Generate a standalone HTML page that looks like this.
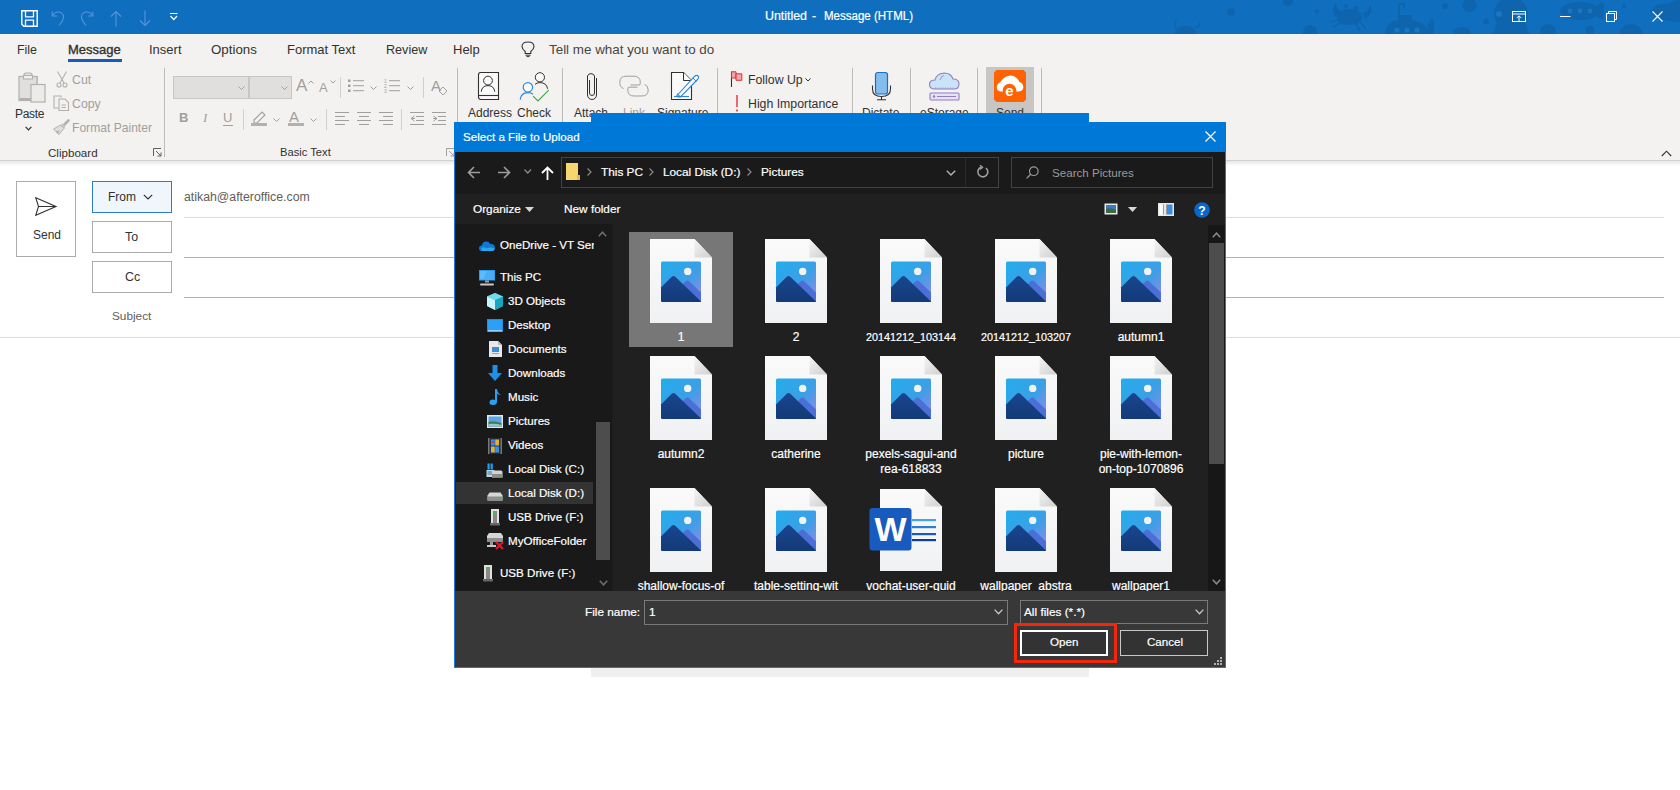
<!DOCTYPE html>
<html><head><meta charset="utf-8">
<style>
*{margin:0;padding:0;box-sizing:border-box}
html,body{width:1680px;height:790px;overflow:hidden;background:#fff;font-family:"Liberation Sans",sans-serif;position:relative}
.a{position:absolute}
.t{position:absolute;white-space:nowrap;line-height:1}
svg{position:absolute;overflow:visible}
#title{left:0;top:0;width:1680px;height:34px;background:#106ebe;overflow:hidden}
#tabs{left:0;top:34px;width:1680px;height:34px;background:#f3f2f1}
#ribbon{left:0;top:68px;width:1680px;height:93px;background:#f3f2f1;border-bottom:1px solid #d2d0ce}
.sep{position:absolute;width:1px;background:#bdbbb8}
.dis{color:#a19f9d}
.rt{color:#323130;font-size:12px}
.box{position:absolute;border:1px solid #ababab;background:#fff}
.line{position:absolute;height:1px;background:#c8c6c4}
#dlg{left:454px;top:122px;width:772px;height:546px;background:#191919;border:1px solid #1a7ad8;border-top:none}
.navt{position:absolute;color:#fff;font-size:11.6px;white-space:nowrap;line-height:1}
.fl{position:absolute;color:#fff;font-size:12px;white-space:nowrap;line-height:15px;text-align:center;width:110px}
.t[style*="color:#fff"],.navt,.fl{-webkit-text-stroke:0.2px currentColor}
</style></head>
<body>
<svg width="0" height="0" style="position:absolute">
<defs>
<linearGradient id="pg" x1="0" y1="0" x2="0" y2="1"><stop offset="0" stop-color="#fafafa"/><stop offset="1" stop-color="#f0f1f3"/></linearGradient>
<linearGradient id="fg" x1="0" y1="0" x2="1" y2="1"><stop offset="0" stop-color="#f4f4f4"/><stop offset="1" stop-color="#cfcfcf"/></linearGradient>
<linearGradient id="sky" x1="0" y1="0" x2="1" y2="1"><stop offset="0" stop-color="#22adec"/><stop offset="0.55" stop-color="#3c9fe6"/><stop offset="1" stop-color="#9a88e6"/></linearGradient>
<linearGradient id="mtn" x1="0" y1="0" x2="0" y2="1"><stop offset="0" stop-color="#1a468f"/><stop offset="1" stop-color="#133a78"/></linearGradient>
<symbol id="imgdoc" viewBox="0 0 62 84">
<path d="M0 0H44.5L62 18.5V84H0Z" fill="url(#pg)"/>
<path d="M44.5 0V18.5H62Z" fill="url(#fg)"/>
<rect x="11" y="22.5" width="40" height="40.5" rx="1.5" fill="url(#sky)"/>
<circle cx="37.7" cy="32.4" r="3.7" fill="#f2f2f2"/>
<path d="M23 42.5Q37 40 51 53.5V63H32Z" fill="#4a6bd5" opacity="0"/>
<path d="M27 51Q34 43.5 36 42Q37.5 41 39 42.3L51 53.5V63H30Z" fill="#4b6ed7"/>
<path d="M11 48.5L22 37.6Q23.5 36.3 25 37.6L51 62.6Q50.6 63 49.5 63H12.5Q11 63 11 61.5Z" fill="url(#mtn)"/>
</symbol>
</defs></svg>
<!-- TITLE BAR -->
<div id="title" class="a"></div>
<!-- title pattern -->
<svg style="left:0;top:0" width="1680" height="34"><g fill="#0f64ae">
<circle cx="1231" cy="12" r="3.8"/><circle cx="1288" cy="1" r="5"/><circle cx="1317" cy="11.6" r="2.3"/>
<path d="M1337 18Q1340 8 1350 9Q1360 9 1362 17Q1362 24 1350 25Q1338 25 1337 18Z"/>
<path d="M1336 16Q1332 10 1336 3Q1334 8 1340 12Z M1364 14Q1370 12 1370 6Q1372 12 1366 18Z M1338 20L1330 22M1340 23L1333 27M1360 22L1366 29M1356 24L1360 31" stroke="#0f64ae" stroke-width="1.6"/>
<circle cx="1346" cy="6" r="2"/><circle cx="1356" cy="8" r="2"/>
<path d="M1175 32Q1178 25 1186 26Q1194 26 1196 32L1196 34H1175Z"/><path d="M1176 28Q1174 22 1177 20M1196 28Q1200 26 1200 22" stroke="#0f64ae" stroke-width="1.4" fill="none"/>
<path d="M1303 34Q1303 25 1310 25Q1317 25 1317 34Z"/>
<path d="M1385 34Q1385 22 1398 20V15H1412V20Q1424 22 1428 30L1432 34Z"/><path d="M1399 16V4H1404V8" stroke="#0f64ae" stroke-width="2" fill="none"/><path d="M1428 24Q1430 18 1434 20V34H1428Z"/>
<circle cx="1445" cy="6" r="3"/><circle cx="1469.5" cy="5" r="7"/><circle cx="1486" cy="21.5" r="3"/>
<ellipse cx="1511" cy="14" rx="17" ry="17"/><path d="M1496 24Q1494 34 1490 34H1532Q1528 34 1526 24Z"/>
<path d="M1453 32Q1455 27 1462 27Q1469 27 1471 32V34H1453Z"/>
<ellipse cx="1580" cy="11" rx="20" ry="9"/><path d="M1596 8Q1600 0 1604 4Q1604 12 1604 18Q1600 22 1596 14Z"/>
<path d="M1540 30Q1542 24 1548 24Q1554 24 1556 30V34H1540Z"/>
<circle cx="1590" cy="30" r="4.5"/><circle cx="1624" cy="6" r="2"/><circle cx="1631" cy="36" r="12"/>
<path d="M1650 12Q1656 2 1668 4Q1676 0 1680 -2V22Q1668 22 1656 18Z"/>
</g><g fill="#1a75c2"><circle cx="1499" cy="14" r="3"/><circle cx="1570" cy="11" r="2.4"/><circle cx="1580" cy="11" r="2.4"/><circle cx="1590" cy="11" r="2.4"/><circle cx="1397" cy="30" r="2.6"/><circle cx="1407" cy="30" r="2.6"/><circle cx="1417" cy="30" r="2.6"/></g></svg>
<svg style="left:21px;top:10px" width="17" height="17"><path d="M0.8 0.8H16.2V16.2H2.8L0.8 14.2Z" stroke="#fff" stroke-width="1.4" fill="none"/><path d="M4.5 1V6.8H12.5V1" stroke="#fff" stroke-width="1.3" fill="none"/><path d="M4.5 16V10.2H12.5V16" stroke="#fff" stroke-width="1.3" fill="none"/></svg>
<svg style="left:51px;top:10px" width="14" height="16"><path d="M1.2 1.5V6H5.8" stroke="#5596d8" stroke-width="1.1" fill="none"/><path d="M1.5 5.6Q4 1.5 8 2Q12.5 3 12.5 7Q12.5 10 8 15.5" stroke="#5596d8" stroke-width="1.1" fill="none"/></svg>
<svg style="left:80px;top:10px" width="14" height="16"><path d="M12.8 1.5V6H8.2" stroke="#5596d8" stroke-width="1.1" fill="none"/><path d="M12.5 5.6Q10 1.5 6 2Q1.5 3 1.5 7Q1.5 10 6 15.5" stroke="#5596d8" stroke-width="1.1" fill="none"/></svg>
<svg style="left:110px;top:10px" width="12" height="17"><path d="M6 1.5V16.5M1 6.5L6 1.5L11 6.5" stroke="#5596d8" stroke-width="1.1" fill="none"/></svg>
<svg style="left:139px;top:10px" width="12" height="17"><path d="M6 0.5V15.5M1 10.5L6 15.5L11 10.5" stroke="#5596d8" stroke-width="1.1" fill="none"/></svg>
<svg style="left:170px;top:13px" width="8" height="8"><path d="M0 0.5H7.5" stroke="#fff" stroke-width="1"/><path d="M0.5 3L3.8 6.5L7 3" stroke="#fff" stroke-width="1.3" fill="none"/></svg>
<div class="t" style="left:765px;top:10px;font-size:12.4px;color:#fff">Untitled</div><div class="t" style="left:812px;top:10px;font-size:12.4px;color:#fff">-</div><div class="t" style="left:824px;top:10px;font-size:12.4px;color:#fff;transform:scaleX(0.93);transform-origin:0 0">Message (HTML)</div>
<svg style="left:1512px;top:11px" width="14" height="11"><rect x="0.5" y="0.5" width="13" height="10" stroke="#fff" stroke-width="1" fill="none"/><path d="M0.5 3H13.5" stroke="#fff" stroke-width="1"/><path d="M7 10V5M4.8 7L7 4.8L9.2 7" stroke="#fff" stroke-width="1" fill="none"/></svg>
<svg style="left:1560px;top:16px" width="11" height="1"><path d="M0 0.5H10.5" stroke="#fff" stroke-width="1"/></svg>
<svg style="left:1606px;top:11px" width="11" height="11"><rect x="0.5" y="2.5" width="8" height="8" stroke="#fff" stroke-width="1" fill="none"/><path d="M2.5 2.5V0.5H10.5V8.5H8.5" stroke="#fff" stroke-width="1" fill="none"/></svg>
<svg style="left:1652px;top:11px" width="11" height="11"><path d="M0.5 0.5L10.5 10.5M10.5 0.5L0.5 10.5" stroke="#fff" stroke-width="1.1"/></svg>
<div id="tabs" class="a"></div>
<div class="t rt" style="left:17px;top:44px;font-size:12.4px">File</div>
<div class="t rt" style="left:68px;top:43px;font-size:13px;-webkit-text-stroke:0.35px currentColor">Message</div>
<div class="a" style="left:68px;top:59px;width:54px;height:3px;background:#185abd"></div>
<div class="t rt" style="left:149px;top:43px;font-size:13px">Insert</div>
<div class="t rt" style="left:211px;top:43px;font-size:13.3px">Options</div>
<div class="t rt" style="left:287px;top:43px;font-size:13px">Format Text</div>
<div class="t rt" style="left:386px;top:44px;font-size:12.6px">Review</div>
<div class="t rt" style="left:453px;top:43px;font-size:13px">Help</div>
<svg style="left:521px;top:41px" width="14" height="16"><path d="M4.2 10.5Q1 8.2 1 5.6Q1 1 7 1Q13 1 13 5.6Q13 8.2 9.8 10.5V12.5H4.2Z" stroke="#323130" stroke-width="1.1" fill="none"/><path d="M4.5 14.2H9.5M5.5 15.6H8.5" stroke="#323130" stroke-width="1"/></svg>
<div class="t rt" style="left:549px;top:43px;font-size:13.4px;color:#484644">Tell me what you want to do</div>
<div id="ribbon" class="a"></div>
<div class="a" style="left:0;top:161px;width:1680px;height:5px;background:linear-gradient(#e8e7e6,#fff)"></div>
<!-- clipboard group -->
<svg style="left:18px;top:72px" width="28" height="31"><path d="M1 4.5H6V3Q6 1 8 1H12Q14 1 14 3V4.5H19V12" stroke="#b3b0ad" stroke-width="1.2" fill="#e6e6e6"/><rect x="1" y="4.5" width="18" height="24" fill="#e1dfdd" stroke="#b3b0ad" stroke-width="1.2"/><rect x="1.6" y="26" width="17" height="2.4" fill="#b3b0ad"/><rect x="5.5" y="3.5" width="9" height="3.5" fill="#f3f2f1" stroke="#b3b0ad" stroke-width="1.1"/><rect x="13" y="12.5" width="14" height="17.5" fill="#edebe9" stroke="#b3b0ad" stroke-width="1.2"/></svg>
<div class="t rt" style="left:15px;top:108px;font-size:12px;letter-spacing:-0.3px">Paste</div>
<svg style="left:25px;top:126px" width="7" height="5"><path d="M0.6 0.8L3.5 3.8L6.4 0.8" stroke="#323130" stroke-width="1.2" fill="none"/></svg>
<svg style="left:56px;top:71px" width="12" height="17"><path d="M1.5 0.5L8 12M10.5 0.5L4 12" stroke="#b3b0ad" stroke-width="1.1" fill="none"/><circle cx="3" cy="14" r="2" stroke="#b3b0ad" stroke-width="1.1" fill="none"/><circle cx="9" cy="14" r="2" stroke="#b3b0ad" stroke-width="1.1" fill="none"/></svg>
<div class="t dis" style="left:72px;top:74px;font-size:12.3px">Cut</div>
<svg style="left:53px;top:95px" width="17" height="16"><path d="M8 2.5V1H1V13H6" stroke="#b3b0ad" stroke-width="1.1" fill="none"/><path d="M6 4H12L15.5 7.5V15.5H6Z" stroke="#b3b0ad" stroke-width="1.1" fill="none"/><path d="M8.5 10H13M8.5 12.5H13" stroke="#b3b0ad" stroke-width="1"/></svg>
<div class="t dis" style="left:72px;top:98px;font-size:12.3px">Copy</div>
<svg style="left:53px;top:119px" width="17" height="17"><path d="M10.5 6.5L15.5 1.5" stroke="#b3b0ad" stroke-width="2.6" stroke-linecap="round"/><path d="M9 4.5L12.5 8L11 9.5L7.5 6Z" fill="#c8c6c4"/><path d="M7.5 6L11 9.5L6 15.5L0.5 10Z" fill="#e1dfdd" stroke="#b3b0ad" stroke-width="1"/><path d="M2.5 12L7 11.5L4.5 15" fill="#b3b0ad"/></svg>
<div class="t dis" style="left:72px;top:122px;font-size:12.1px">Format Painter</div>
<div class="t rt" style="left:48px;top:147px;font-size:11.6px">Clipboard</div>
<svg style="left:153px;top:148px" width="9" height="9"><path d="M0.5 8V0.5H8" stroke="#605e5c" stroke-width="1" fill="none"/><path d="M3 3L8 8M8 4.5V8H4.5" stroke="#605e5c" stroke-width="1" fill="none"/></svg>
<div class="sep" style="left:164px;top:68px;height:89px"></div>
<!-- basic text -->
<div class="a" style="left:173px;top:76px;width:76px;height:23px;background:#e1dfdd;border:1px solid #c8c6c4"></div>
<div class="a" style="left:249px;top:76px;width:43px;height:23px;background:#e1dfdd;border:1px solid #c8c6c4"></div>
<svg style="left:238px;top:86px" width="7" height="5"><path d="M0.5 0.5L3.5 3.5L6.5 0.5" stroke="#a19f9d" stroke-width="1" fill="none"/></svg>
<svg style="left:281px;top:86px" width="7" height="5"><path d="M0.5 0.5L3.5 3.5L6.5 0.5" stroke="#a19f9d" stroke-width="1" fill="none"/></svg>
<div class="t dis" style="left:296px;top:77px;font-size:17px;color:#a19f9d">A</div>
<svg style="left:308px;top:80px" width="6" height="4"><path d="M0.5 3.5L3 1L5.5 3.5" stroke="#a19f9d" stroke-width="1" fill="none"/></svg>
<div class="t dis" style="left:319px;top:81px;font-size:13px">A</div>
<svg style="left:330px;top:80px" width="6" height="4"><path d="M0.5 0.5L3 3L5.5 0.5" stroke="#a19f9d" stroke-width="1" fill="none"/></svg>
<div class="sep" style="left:340px;top:77px;height:21px;background:#d2d0ce"></div>
<svg style="left:348px;top:79px" width="16" height="14"><g fill="#a19f9d"><rect x="0" y="0.5" width="2.5" height="2.5"/><rect x="0" y="5.5" width="2.5" height="2.5"/><rect x="0" y="10.5" width="2.5" height="2.5"/><rect x="5" y="1.2" width="11" height="1"/><rect x="5" y="6.2" width="11" height="1"/><rect x="5" y="11.2" width="11" height="1"/></g></svg>
<svg style="left:370px;top:86px" width="7" height="5"><path d="M0.5 0.5L3.5 3.5L6.5 0.5" stroke="#a19f9d" stroke-width="1" fill="none"/></svg>
<svg style="left:384px;top:78px" width="16" height="16"><g fill="#a19f9d"><text x="0" y="5" font-size="5" font-family="Liberation Sans">1</text><text x="0" y="10" font-size="5" font-family="Liberation Sans">2</text><text x="0" y="15" font-size="5" font-family="Liberation Sans">3</text><rect x="5" y="2.2" width="11" height="1"/><rect x="5" y="7.2" width="11" height="1"/><rect x="5" y="12.2" width="11" height="1"/></g></svg>
<svg style="left:407px;top:86px" width="7" height="5"><path d="M0.5 0.5L3.5 3.5L6.5 0.5" stroke="#a19f9d" stroke-width="1" fill="none"/></svg>
<div class="sep" style="left:423px;top:77px;height:21px;background:#d2d0ce"></div>
<div class="t dis" style="left:431px;top:78px;font-size:15px">A</div>
<svg style="left:438px;top:86px" width="10" height="9"><path d="M1 5L5 1L9 5L5 9Z" stroke="#a19f9d" stroke-width="1" fill="none"/></svg>
<div class="t" style="left:179px;top:111px;font-size:13px;font-weight:bold;color:#a19f9d">B</div>
<div class="t" style="left:203px;top:111px;font-size:13px;font-style:italic;color:#a19f9d;font-family:'Liberation Serif',serif">I</div>
<div class="t" style="left:223px;top:111px;font-size:13px;color:#a19f9d">U</div>
<div class="a" style="left:223px;top:125px;width:10px;height:1px;background:#a19f9d"></div>
<div class="sep" style="left:243px;top:109px;height:21px;background:#d2d0ce"></div>
<svg style="left:251px;top:110px" width="17" height="16"><path d="M3 10L11 2L14 5L6 13H3Z" stroke="#a19f9d" stroke-width="1.1" fill="none"/><rect x="0" y="13" width="16" height="3" fill="#b3b0ad"/></svg>
<svg style="left:273px;top:118px" width="7" height="5"><path d="M0.5 0.5L3.5 3.5L6.5 0.5" stroke="#a19f9d" stroke-width="1" fill="none"/></svg>
<div class="t dis" style="left:289px;top:109px;font-size:15px">A</div>
<div class="a" style="left:288px;top:123px;width:16px;height:3px;background:#b3b0ad"></div>
<svg style="left:310px;top:118px" width="7" height="5"><path d="M0.5 0.5L3.5 3.5L6.5 0.5" stroke="#a19f9d" stroke-width="1" fill="none"/></svg>
<div class="sep" style="left:326px;top:109px;height:21px;background:#d2d0ce"></div>
<svg style="left:335px;top:112px" width="58" height="13"><g fill="#a19f9d"><rect x="0" y="0" width="14" height="1"/><rect x="0" y="4" width="10" height="1"/><rect x="0" y="8" width="14" height="1"/><rect x="0" y="12" width="10" height="1"/>
<rect x="22" y="0" width="14" height="1"/><rect x="24" y="4" width="10" height="1"/><rect x="22" y="8" width="14" height="1"/><rect x="24" y="12" width="10" height="1"/>
<rect x="44" y="0" width="14" height="1"/><rect x="48" y="4" width="10" height="1"/><rect x="44" y="8" width="14" height="1"/><rect x="48" y="12" width="10" height="1"/></g></svg>
<div class="sep" style="left:401px;top:109px;height:21px;background:#d2d0ce"></div>
<svg style="left:410px;top:112px" width="38" height="13"><g fill="#a19f9d"><rect x="0" y="0" width="14" height="1"/><rect x="6" y="4" width="8" height="1"/><rect x="6" y="8" width="8" height="1"/><rect x="0" y="12" width="14" height="1"/>
<rect x="22" y="0" width="14" height="1"/><rect x="28" y="4" width="8" height="1"/><rect x="28" y="8" width="8" height="1"/><rect x="22" y="12" width="14" height="1"/></g><path d="M4.5 4L1 6.5L4.5 9M1 6.5H5" stroke="#a19f9d" stroke-width="1" fill="none"/><path d="M23.5 4L27 6.5L23.5 9M23 6.5H27" stroke="#a19f9d" stroke-width="1" fill="none"/></svg>
<div class="t rt" style="left:280px;top:147px;font-size:11.2px">Basic Text</div>
<svg style="left:446px;top:148px" width="9" height="9"><path d="M0.5 8V0.5H8" stroke="#a19f9d" stroke-width="1" fill="none"/><path d="M3 3L8 8M8 4.5V8H4.5" stroke="#a19f9d" stroke-width="1" fill="none"/></svg>
<div class="sep" style="left:457px;top:68px;height:89px"></div>
<!-- names / include -->
<svg style="left:478px;top:72px" width="22" height="29"><path d="M2.5 0.5H20.5V27.5H3Q0.5 27.5 0.5 25V3Q0.5 0.5 2.5 0.5Z" stroke="#323130" stroke-width="1.1" fill="#fafafa"/><path d="M0.8 23.5H20.5" stroke="#323130" stroke-width="1.1"/><circle cx="10" cy="8.6" r="4.4" stroke="#323130" stroke-width="1" fill="none"/><path d="M3.2 19.7Q4 13.6 10 13.6Q16 13.6 16.8 19.7" stroke="#323130" stroke-width="1" fill="none"/></svg>
<div class="t rt" style="left:468px;top:107px;font-size:12px">Address</div>
<svg style="left:519px;top:72px" width="31" height="30"><circle cx="20.9" cy="5.3" r="4.6" stroke="#323130" stroke-width="1" fill="#fafafa"/><path d="M16 12.3Q18 10.6 20.9 10.6Q27.6 10.6 28.6 16.8" stroke="#323130" stroke-width="1" fill="none"/><circle cx="8.9" cy="15.3" r="4.7" stroke="#2b88d8" stroke-width="1.2" fill="#fafafa"/><path d="M1.2 27.7Q1.8 20.6 8.9 20.6Q12.3 20.6 14 22.2" stroke="#2b88d8" stroke-width="1.2" fill="none"/><path d="M14.1 24.1L19 28.9L29.7 18.1" stroke="#3aa645" stroke-width="1.1" fill="none"/></svg>
<div class="t rt" style="left:517px;top:107px;font-size:12px">Check</div>
<div class="sep" style="left:562px;top:68px;height:89px"></div>
<svg style="left:585px;top:71px" width="14" height="31"><path d="M4.5 9V22A2.5 2.5 0 0 0 9.5 22V5A3.75 3.75 0 0 0 2.5 5V24A4.5 4.5 0 0 0 11.5 24V7" stroke="#323130" stroke-width="1" fill="none"/></svg>
<div class="t rt" style="left:574px;top:107px;font-size:12px">Attach</div>
<svg style="left:619px;top:75px" width="31" height="22"><path d="M4.5 13.5Q0.8 12.5 0.8 7.3Q0.8 1.2 7 1.2H15Q21.3 1.2 21.3 7.3Q21.3 9 20.7 10H11.5" stroke="#a19f9d" stroke-width="1" fill="none"/><path d="M25.5 9.5Q29.2 10.5 29.2 15Q29.2 21 23 21H15Q8.8 21 8.8 15Q8.8 13 9.4 12.2H18.5" stroke="#a19f9d" stroke-width="1" fill="none"/></svg>
<div class="t dis" style="left:623px;top:107px;font-size:12px">Link</div>
<svg style="left:671px;top:72px" width="29" height="29"><path d="M0.5 0.5H12.5L20.5 8.5V27.5H0.5Z" stroke="#323130" stroke-width="1.1" fill="#fafafa"/><path d="M12.5 0.5V8.5H20.5" stroke="#323130" stroke-width="1" fill="#fafafa"/><path d="M6.5 23L23.5 4.5Q25.5 2.5 27 4Q28.5 5.5 26.5 7.5L9.5 25L5.8 24.5Z" stroke="#2b88d8" stroke-width="1.1" fill="#fafafa"/><path d="M5.8 24.5L9.5 25L6.5 21.5Z" fill="#7cb9ea" stroke="#2b88d8" stroke-width="0.8"/><path d="M22 6L25.5 9.5" stroke="#2b88d8" stroke-width="1"/><path d="M3 24.5H18" stroke="#2b88d8" stroke-width="1.1"/></svg>
<div class="t rt" style="left:657px;top:107px;font-size:12px">Signature</div>
<div class="sep" style="left:717px;top:68px;height:89px"></div>
<!-- tags -->
<svg style="left:730px;top:71px" width="13" height="17"><path d="M1.5 0.5V16" stroke="#323130" stroke-width="1.1"/><path d="M1.5 0.8H6V7H1.5Z" fill="#f8a1a8" stroke="#d13438" stroke-width="1"/><path d="M6 2.8H11.8V9.3H6Z" fill="#f8a1a8" stroke="#d13438" stroke-width="1"/></svg>
<div class="t rt" style="left:748px;top:74px;font-size:12.3px">Follow Up</div>
<svg style="left:805px;top:78px" width="6" height="4"><path d="M0.4 0.4L3 3L5.6 0.4" stroke="#323130" stroke-width="1" fill="none"/></svg>
<svg style="left:735px;top:95px" width="4" height="17"><rect x="1.2" y="0" width="1.6" height="12" fill="#e8474f"/><rect x="1" y="14.6" width="2" height="1.8" fill="#e8474f"/></svg>
<div class="t rt" style="left:748px;top:98px;font-size:12.3px">High Importance</div>
<div class="sep" style="left:852px;top:68px;height:89px"></div>
<!-- dictate -->
<svg style="left:871px;top:71px" width="21" height="30"><rect x="4.5" y="1.5" width="12" height="21.5" rx="2.2" stroke="#1a6fc4" stroke-width="1.2" fill="#84bdec"/><path d="M1.5 14.5V18Q1.5 25.5 10.5 25.5Q19.5 25.5 19.5 18V14.5" stroke="#323130" stroke-width="1.1" fill="none"/><path d="M10.5 25.5V28.5M6 28.8H15" stroke="#323130" stroke-width="1.1"/></svg>
<div class="t rt" style="left:862px;top:107px;font-size:12px">Dictate</div>
<div class="sep" style="left:910px;top:68px;height:89px"></div>
<svg style="left:929px;top:72px" width="31" height="29"><path d="M6 17Q0.5 17 0.5 12.5Q0.5 8 6 8Q7 2 15 1Q22 1 24 7Q30 7 30 12Q30 17 25 17Z" stroke="#8f7fbf" stroke-width="1.1" fill="#c9e4f7"/><path d="M11 8Q12 4 15 3.5" stroke="#8f7fbf" stroke-width="0.8" fill="none"/><path d="M6 16H25" stroke="#8f7fbf" stroke-width="0.8" stroke-dasharray="1 1.5"/><rect x="1" y="21" width="29" height="7" rx="1" stroke="#8f7fbf" stroke-width="1.1" fill="#e9e1f5"/><circle cx="5" cy="24.5" r="1.2" fill="#8f7fbf"/><path d="M8 24.5H27" stroke="#8f7fbf" stroke-width="1"/></svg>
<div class="t rt" style="left:920px;top:107px;font-size:12px">eStorage</div>
<div class="sep" style="left:977px;top:68px;height:89px"></div>
<div class="a" style="left:986px;top:67px;width:48px;height:50px;background:#c8c6c4"></div>
<svg style="left:994px;top:70px" width="32" height="32"><path d="M2.5 0H29.5L32 2.5V29.5L29.5 32H2.5L0 29.5V2.5Z" fill="#ff6200"/><path d="M6.5 21.5Q2.5 21 2.8 17Q3 13.5 6.5 12Q9.5 7 14 6Q18.5 4.5 22 7.5Q25 10 25.5 12Q29.5 13.5 29.3 17.5Q29 21 25 21.5Z" fill="#fff"/><circle cx="15.5" cy="20.5" r="6.8" fill="#ff6200"/><text x="15.5" y="26" font-family="Liberation Sans" font-weight="bold" font-size="15" fill="#fff" text-anchor="middle">e</text></svg>
<div class="t rt" style="left:996px;top:107px;font-size:12px">Send</div>
<div class="sep" style="left:1041px;top:68px;height:89px"></div>
<svg style="left:1661px;top:150px" width="11" height="7"><path d="M0.8 6L5.5 1.2L10.2 6" stroke="#323130" stroke-width="1.1" fill="none"/></svg>

<!-- FORM -->
<div class="box" style="left:16px;top:181px;width:60px;height:76px"></div>
<div class="box" style="left:92px;top:181px;width:80px;height:32px;border-color:#2b7bd3;background:#eff6fc"></div>
<div class="box" style="left:92px;top:221px;width:80px;height:32px"></div>
<div class="box" style="left:92px;top:261px;width:80px;height:32px"></div>
<div class="line" style="left:184px;top:217px;width:1480px;background:#e1dfdd"></div>
<div class="line" style="left:184px;top:257px;width:1480px;background:#b3b0ad"></div>
<div class="line" style="left:184px;top:297px;width:1480px;background:#b3b0ad"></div>
<div class="line" style="left:0;top:337px;width:1680px;background:#e1dfdd"></div>
<svg style="left:35px;top:197px" width="22" height="19"><path d="M0.8 0.8L21 9.5L0.8 18.2L3.5 9.5Z" stroke="#323130" stroke-width="1.1" fill="none" stroke-linejoin="miter"/><path d="M3.5 9.5H21" stroke="#323130" stroke-width="1"/></svg>
<div class="t rt" style="left:33px;top:229px;font-size:12px">Send</div>
<div class="t rt" style="left:108px;top:191px;font-size:12px">From</div>
<svg style="left:143px;top:194px" width="10" height="6"><path d="M0.8 0.8L5 5L9.2 0.8" stroke="#323130" stroke-width="1.2" fill="none"/></svg>
<div class="t rt" style="left:125px;top:231px;font-size:12.4px">To</div>
<div class="t rt" style="left:125px;top:271px;font-size:12.4px">Cc</div>
<div class="t rt" style="left:112px;top:311px;font-size:11.8px;color:#605e5c">Subject</div>
<div class="t rt" style="left:184px;top:191px;font-size:12.3px;color:#605e5c">atikah@afteroffice.com</div>

<!-- BEHIND WINDOW -->
<div class="a" style="left:591px;top:113px;width:498px;height:10px;background:#0078d7"></div>
<div class="a" style="left:591px;top:668px;width:498px;height:9px;background:#efefef"></div>

<!-- DIALOG -->

<div id="dlg" class="a"></div>
<!-- dialog title -->
<div class="a" style="left:454px;top:122px;width:772px;height:30px;background:#0078d7"></div>
<div class="t" style="left:463px;top:131px;font-size:11.6px;color:#fff">Select a File to Upload</div>
<svg style="left:1205px;top:131px" width="11" height="11"><path d="M0.5 0.5L10.5 10.5M10.5 0.5L0.5 10.5" stroke="#fff" stroke-width="1.2"/></svg>
<!-- nav row -->
<div class="a" style="left:455px;top:152px;width:770px;height:42px;background:#1a1a1a"></div>
<svg style="left:467px;top:166px" width="14" height="13"><path d="M13 6.5H1.5M7 1L1.5 6.5L7 12" stroke="#9d9d9d" stroke-width="1.6" fill="none"/></svg>
<svg style="left:497px;top:166px" width="14" height="13"><path d="M1 6.5H12.5M7 1L12.5 6.5L7 12" stroke="#9d9d9d" stroke-width="1.6" fill="none"/></svg>
<svg style="left:524px;top:169px" width="8" height="6"><path d="M0.5 0.5L3.75 4L7 0.5" stroke="#8a8a8a" stroke-width="1.3" fill="none"/></svg>
<svg style="left:541px;top:166px" width="13" height="14"><path d="M6.5 14V1.5M1 7L6.5 1.5L12 7" stroke="#fff" stroke-width="1.8" fill="none"/></svg>
<div class="a" style="left:561px;top:157px;width:438px;height:31px;border:1px solid #434343;background:#1a1a1a"></div>
<div class="a" style="left:965px;top:158px;width:1px;height:29px;background:#2a2a2a"></div>
<svg style="left:566px;top:163px" width="14" height="17"><path d="M0 0H12V13H14V17H0Z" fill="#f7d66f"/><path d="M11 12H14V17H11Z" fill="#e1b94c"/></svg>
<svg style="left:587px;top:168px" width="5" height="8"><path d="M0.5 0.5L4 4L0.5 7.5" stroke="#8a8a8a" stroke-width="1.2" fill="none"/></svg>
<div class="t" style="left:601px;top:167px;font-size:11.8px;color:#fff">This PC</div>
<svg style="left:649px;top:168px" width="5" height="8"><path d="M0.5 0.5L4 4L0.5 7.5" stroke="#8a8a8a" stroke-width="1.2" fill="none"/></svg>
<div class="t" style="left:663px;top:167px;font-size:11.8px;color:#fff">Local Disk (D:)</div>
<svg style="left:747px;top:168px" width="5" height="8"><path d="M0.5 0.5L4 4L0.5 7.5" stroke="#8a8a8a" stroke-width="1.2" fill="none"/></svg>
<div class="t" style="left:761px;top:167px;font-size:11.8px;color:#fff">Pictures</div>
<svg style="left:946px;top:170px" width="10" height="7"><path d="M0.8 0.8L5 5L9.2 0.8" stroke="#b0b0b0" stroke-width="1.5" fill="none"/></svg>
<svg style="left:977px;top:165px" width="12" height="13"><path d="M4 2.2A5 5 0 1 0 9 3" stroke="#a0a0a0" stroke-width="1.6" fill="none"/><path d="M3 0.2L5.5 2.3L3 4.5" stroke="#a0a0a0" stroke-width="1.4" fill="none"/></svg>
<div class="a" style="left:1011px;top:157px;width:202px;height:31px;border:1px solid #434343;background:#1a1a1a"></div>
<svg style="left:1026px;top:166px" width="13" height="13"><circle cx="7.8" cy="5.2" r="4.3" stroke="#9a9a9a" stroke-width="1.2" fill="none"/><path d="M4.7 8.3L0.6 12.4" stroke="#9a9a9a" stroke-width="1.3"/></svg>
<div class="t" style="left:1052px;top:167px;font-size:11.6px;color:#9a9a9a">Search Pictures</div>
<!-- toolbar row -->
<div class="a" style="left:455px;top:194px;width:770px;height:30px;background:#202020"></div>
<div class="t" style="left:473px;top:204px;font-size:11.8px;color:#fff">Organize</div>
<svg style="left:525px;top:207px" width="9" height="5"><path d="M0 0H9L4.5 5Z" fill="#d8d8d8"/></svg>
<div class="t" style="left:564px;top:204px;font-size:11.8px;color:#fff">New folder</div>
<svg style="left:1104px;top:203px" width="14" height="12"><rect x="0.5" y="0.5" width="13" height="11" fill="#e8e8e8"/><rect x="2" y="2" width="10" height="8" fill="#3a78c8"/><path d="M2 6Q6 4 12 7V10H2Z" fill="#3d6a3a"/></svg>
<svg style="left:1128px;top:207px" width="9" height="5"><path d="M0 0H9L4.5 5Z" fill="#d8d8d8"/></svg>
<svg style="left:1158px;top:203px" width="16" height="13"><rect x="0" y="0" width="16" height="13" fill="#e8e8e8"/><rect x="1.5" y="1.5" width="3" height="10" fill="#fff"/><rect x="5" y="1.5" width="1" height="10" fill="#9a9a9a"/><rect x="8" y="1.5" width="1" height="10" fill="#9a9a9a"/><rect x="9" y="1.5" width="5.5" height="10" fill="#3a8ee0"/></svg>
<svg style="left:1194px;top:202px" width="16" height="16"><circle cx="8" cy="8" r="7.8" fill="#0a66c8"/><text x="8" y="12.5" font-family="Liberation Sans" font-weight="bold" font-size="12" fill="#fff" text-anchor="middle">?</text></svg>
<!-- left nav pane -->
<div class="a" style="left:455px;top:224px;width:157px;height:367px;background:#191919"></div>
<div class="a" style="left:612px;top:224px;width:1px;height:367px;background:#1e1e1e"></div>
<!-- file area -->
<div class="a" style="left:613px;top:224px;width:612px;height:367px;background:#202020"></div>
<div class="a" style="left:629px;top:232px;width:104px;height:115px;background:#777"></div>
<svg style="left:650px;top:239px" width="62" height="84"><use href="#imgdoc"/></svg>
<div class="fl" style="left:626px;top:330px">1</div>
<svg style="left:765px;top:239px" width="62" height="84"><use href="#imgdoc"/></svg>
<div class="fl" style="left:741px;top:330px">2</div>
<svg style="left:880px;top:239px" width="62" height="84"><use href="#imgdoc"/></svg>
<div class="fl" style="left:856px;top:330px"><span style="font-size:10.8px">20141212_103144</span></div>
<svg style="left:995px;top:239px" width="62" height="84"><use href="#imgdoc"/></svg>
<div class="fl" style="left:971px;top:330px"><span style="font-size:10.8px">20141212_103207</span></div>
<svg style="left:1110px;top:239px" width="62" height="84"><use href="#imgdoc"/></svg>
<div class="fl" style="left:1086px;top:330px">autumn1</div>
<svg style="left:650px;top:356px" width="62" height="84"><use href="#imgdoc"/></svg>
<div class="fl" style="left:626px;top:447px">autumn2</div>
<svg style="left:765px;top:356px" width="62" height="84"><use href="#imgdoc"/></svg>
<div class="fl" style="left:741px;top:447px">catherine</div>
<svg style="left:880px;top:356px" width="62" height="84"><use href="#imgdoc"/></svg>
<div class="fl" style="left:856px;top:447px">pexels-sagui-and<br>rea-618833</div>
<svg style="left:995px;top:356px" width="62" height="84"><use href="#imgdoc"/></svg>
<div class="fl" style="left:971px;top:447px">picture</div>
<svg style="left:1110px;top:356px" width="62" height="84"><use href="#imgdoc"/></svg>
<div class="fl" style="left:1086px;top:447px">pie-with-lemon-<br>on-top-1070896</div>
<svg style="left:650px;top:488px" width="62" height="84"><use href="#imgdoc"/></svg>
<div class="fl" style="left:626px;top:579px">shallow-focus-of</div>
<svg style="left:765px;top:488px" width="62" height="84"><use href="#imgdoc"/></svg>
<div class="fl" style="left:741px;top:579px">table-setting-wit</div>
<svg style="left:866px;top:489px" width="76" height="83" viewBox="0 0 76 83"><path d="M14 0H58.5L76 17.5V82H14Z" fill="url(#pg)"/><path d="M58.5 0V17.5H76Z" fill="url(#fg)"/><rect x="46" y="30" width="24" height="2.2" fill="#41a5ee"/><rect x="46" y="37" width="24" height="2.2" fill="#2b7cd3"/><rect x="46" y="44" width="24" height="2.2" fill="#185abd"/><rect x="46" y="50" width="24" height="2.2" fill="#103f91"/><rect x="3.5" y="19" width="42" height="42.5" rx="3" fill="#185abd"/><text x="24.5" y="52" font-family="Liberation Sans" font-weight="bold" font-size="34" fill="#fff" text-anchor="middle">W</text></svg>
<div class="fl" style="left:856px;top:579px">vochat-user-quid</div>
<svg style="left:995px;top:488px" width="62" height="84"><use href="#imgdoc"/></svg>
<div class="fl" style="left:971px;top:579px">wallpaper_abstra</div>
<svg style="left:1110px;top:488px" width="62" height="84"><use href="#imgdoc"/></svg>
<div class="fl" style="left:1086px;top:579px">wallpaper1</div>
<!-- bottom panel -->

<!-- nav items -->
<div class="a" style="left:456px;top:482px;width:137px;height:22px;background:#333"></div>
<svg style="left:598px;top:231px" width="9" height="6"><path d="M0.8 5.2L4.5 1.2L8.2 5.2" stroke="#6f6f6f" stroke-width="1.5" fill="none"/></svg>
<div class="a" style="left:596px;top:422px;width:14px;height:138px;background:#4d4d4d"></div>
<svg style="left:599px;top:580px" width="9" height="6"><path d="M0.8 0.8L4.5 4.8L8.2 0.8" stroke="#6f6f6f" stroke-width="1.5" fill="none"/></svg>
<div class="a" style="left:455px;top:224px;width:139px;height:367px;overflow:hidden">
 <div class="navt" style="left:45px;top:15px">OneDrive - VT Services</div>
 <div class="navt" style="left:45px;top:47px">This PC</div>
 <div class="navt" style="left:53px;top:71px">3D Objects</div>
 <div class="navt" style="left:53px;top:95px">Desktop</div>
 <div class="navt" style="left:53px;top:119px">Documents</div>
 <div class="navt" style="left:53px;top:143px">Downloads</div>
 <div class="navt" style="left:53px;top:167px">Music</div>
 <div class="navt" style="left:53px;top:191px">Pictures</div>
 <div class="navt" style="left:53px;top:215px">Videos</div>
 <div class="navt" style="left:53px;top:239px">Local Disk (C:)</div>
 <div class="navt" style="left:53px;top:263px">Local Disk (D:)</div>
 <div class="navt" style="left:53px;top:287px">USB Drive (F:)</div>
 <div class="navt" style="left:53px;top:311px">MyOfficeFolder</div>
 <div class="navt" style="left:45px;top:343px">USB Drive (F:)</div>
</div>
<svg style="left:479px;top:240px" width="16" height="11"><path d="M3 11Q0 11 0 8.2Q0 5.6 2.8 5.4Q3.6 1.8 7 1.6Q9.6 1.2 11 3.8Q15.8 4 16 7.6Q16 11 12.8 11Z" fill="#0f78d4"/><path d="M3.5 11Q1.5 10 2.8 7.6Q5 6.4 8 8.4Q11 6.2 16 8.8Q15.6 11 12.8 11Z" fill="#28a8ea"/></svg>
<svg style="left:479px;top:270px" width="16" height="16"><rect x="0" y="0" width="16" height="10.5" fill="#2c9bf0"/><path d="M1 1H15V9.5H1Z" fill="#5cbcff"/><path d="M8 1H15V9.5H4Z" fill="#48aef5"/><rect x="6" y="10.5" width="4" height="2" fill="#a0a0a0"/><rect x="1" y="13.5" width="14" height="2" rx="1" fill="#c8c8c8"/></svg>
<svg style="left:487px;top:293px" width="16" height="17"><path d="M8 0L16 3.5V13L8 17L0 13V3.5Z" fill="#2ec0d6"/><path d="M0 3.5L8 7V17L0 13Z" fill="#c8f4fa"/><path d="M8 7L16 3.5V13L8 17Z" fill="#19a4c0"/><path d="M8 0L16 3.5L8 7L0 3.5Z" fill="#6fdcec"/></svg>
<svg style="left:487px;top:319px" width="16" height="13"><rect x="0" y="0" width="16" height="13" fill="#1f8fe6"/><rect x="1" y="1" width="14" height="10" fill="#2ca0f4"/><rect x="1" y="11" width="14" height="1.5" fill="#8fd0ff"/></svg>
<svg style="left:489px;top:341px" width="13" height="16"><path d="M0 0H9L13 4V16H0Z" fill="#e8e8e8"/><path d="M9 0V4H13Z" fill="#bdbdbd"/><rect x="3" y="6" width="7" height="5" fill="#3b8fd6"/><rect x="3" y="12" width="7" height="1" fill="#8ab"/></svg>
<svg style="left:487px;top:365px" width="16" height="16"><path d="M5.5 0H10.5V8H15L8 16L1 8H5.5Z" fill="#1e90ec"/></svg>
<svg style="left:489px;top:389px" width="12" height="16"><path d="M6 0H8Q8.5 4 12 6Q9 5.5 8 4.5V12.5Q8 16 4 16Q0.5 16 0.5 13.5Q0.5 10.5 4 10.5Q5.2 10.5 6 11Z" fill="#2aa0f0"/></svg>
<svg style="left:487px;top:415px" width="16" height="13"><rect x="0" y="0" width="16" height="13" fill="#e6e6e6"/><rect x="1.5" y="1.5" width="13" height="10" fill="#5aa6e6"/><path d="M1.5 7Q6 5 14.5 8V11.5H1.5Z" fill="#3f7f55"/><path d="M1.5 9Q8 8 14.5 10V11.5H1.5Z" fill="#9fc0d0"/></svg>
<svg style="left:488px;top:438px" width="14" height="16"><rect x="0" y="0" width="14" height="16" fill="#2a2a2a"/><rect x="0" y="0" width="1.5" height="16" fill="#777"/><rect x="12.5" y="0" width="1.5" height="16" fill="#777"/><rect x="2.5" y="1" width="9" height="14" fill="#1d3b78"/><rect x="3" y="1.5" width="3.8" height="6" fill="#3b8fe0"/><rect x="7.2" y="1.5" width="3.8" height="6" fill="#e0b030"/><rect x="3" y="8.5" width="3.8" height="6" fill="#e0b030"/><rect x="7.2" y="8.5" width="3.8" height="6" fill="#3b8fe0"/><rect x="4" y="3" width="2" height="2" fill="#d33"/></svg>
<svg style="left:486px;top:463px" width="17" height="15"><rect x="1.5" y="0.5" width="2.2" height="6" fill="#1ea0f0"/><rect x="4.6" y="0.5" width="2.2" height="6" fill="#1ea0f0"/><rect x="0.5" y="7" width="8" height="7" fill="#c9d3da"/><rect x="1.5" y="8" width="6" height="4" fill="#7aa7c8"/><path d="M6 7.5H15Q16.5 7.5 16.5 9V14.5H6Z" fill="#d2d2d2"/><rect x="6" y="11" width="10.5" height="3.5" fill="#8e8e8e"/><rect x="13.5" y="12" width="1.6" height="1.4" fill="#3c3"/></svg>
<svg style="left:487px;top:492px" width="16" height="9"><path d="M2.5 0.5H13.5L15.5 3.5V8.5H0.5V3.5Z" fill="#d6d6d6"/><rect x="0.5" y="4.5" width="15" height="4" fill="#8f8f8f"/><rect x="12" y="5.8" width="1.8" height="1.5" fill="#3c3"/></svg>
<svg style="left:490px;top:509px" width="10" height="17"><rect x="1" y="0" width="8" height="14" fill="#e0e0e0"/><rect x="3" y="2" width="4" height="12" fill="#888"/><rect x="4" y="3" width="2" height="2" fill="#3c3"/><rect x="0" y="14" width="10" height="2.5" fill="#666"/></svg>
<svg style="left:487px;top:531px" width="17" height="19"><path d="M2 2H14L16 5V11H0V5Z" fill="#d6d6d6"/><rect x="0" y="7" width="16" height="4" fill="#8f8f8f"/><rect x="3" y="11" width="3" height="3" fill="#9a9a9a"/><rect x="0" y="14" width="9" height="2" fill="#c8c8c8"/><path d="M9 11L16 18M16 11L9 18" stroke="#e81123" stroke-width="2.4"/></svg>
<svg style="left:483px;top:565px" width="10" height="17"><rect x="1" y="0" width="8" height="14" fill="#e0e0e0"/><rect x="3" y="2" width="4" height="12" fill="#888"/><rect x="4" y="3" width="2" height="2" fill="#3c3"/><rect x="0" y="14" width="10" height="2.5" fill="#666"/></svg>
<!-- file scrollbar -->
<div class="a" style="left:1208px;top:225px;width:17px;height:366px;background:#171717"></div>
<svg style="left:1212px;top:232px" width="9" height="6"><path d="M0.8 5.2L4.5 1.2L8.2 5.2" stroke="#8a8a8a" stroke-width="1.5" fill="none"/></svg>
<div class="a" style="left:1209px;top:243px;width:15px;height:221px;background:#4d4d4d"></div>
<svg style="left:1212px;top:579px" width="9" height="6"><path d="M0.8 0.8L4.5 4.8L8.2 0.8" stroke="#8a8a8a" stroke-width="1.5" fill="none"/></svg>

<div class="a" style="left:455px;top:591px;width:770px;height:76px;background:#383838"></div>
<div class="t" style="left:585px;top:607px;font-size:11.8px;color:#fff">File name:</div>
<div class="a" style="left:644px;top:600px;width:364px;height:25px;border:1px solid #7a7a7a;background:#383838"></div>
<div class="t" style="left:649px;top:607px;font-size:11.8px;color:#fff">1</div>
<svg style="left:994px;top:609px" width="9" height="6"><path d="M0.6 0.6L4.5 4.8L8.4 0.6" stroke="#c8c8c8" stroke-width="1.3" fill="none"/></svg>
<div class="a" style="left:1020px;top:600px;width:188px;height:24px;border:1px solid #7a7a7a;background:#383838"></div>
<div class="t" style="left:1024px;top:607px;font-size:11.8px;color:#fff">All files (*.*)</div>
<svg style="left:1195px;top:609px" width="9" height="6"><path d="M0.6 0.6L4.5 4.8L8.4 0.6" stroke="#c8c8c8" stroke-width="1.3" fill="none"/></svg>
<div class="a" style="left:1020px;top:630px;width:88px;height:26px;border:2px solid #fff;background:#333"></div>
<div class="t" style="left:1050px;top:636px;font-size:11.6px;color:#fff">Open</div>
<div class="a" style="left:1120px;top:630px;width:88px;height:26px;border:1.5px solid #c8c8c8;background:#333"></div>
<div class="t" style="left:1147px;top:636px;font-size:11.6px;color:#fff">Cancel</div>
<div class="a" style="left:1014px;top:623px;width:103px;height:40px;border:3px solid #f5260a"></div>
<svg style="left:1214px;top:657px" width="9" height="9"><g fill="#b0b0b0"><rect x="6" y="0" width="2" height="2"/><rect x="6" y="3" width="2" height="2"/><rect x="3" y="3" width="2" height="2"/><rect x="6" y="6" width="2" height="2"/><rect x="3" y="6" width="2" height="2"/><rect x="0" y="6" width="2" height="2"/></g></svg>

</body></html>
